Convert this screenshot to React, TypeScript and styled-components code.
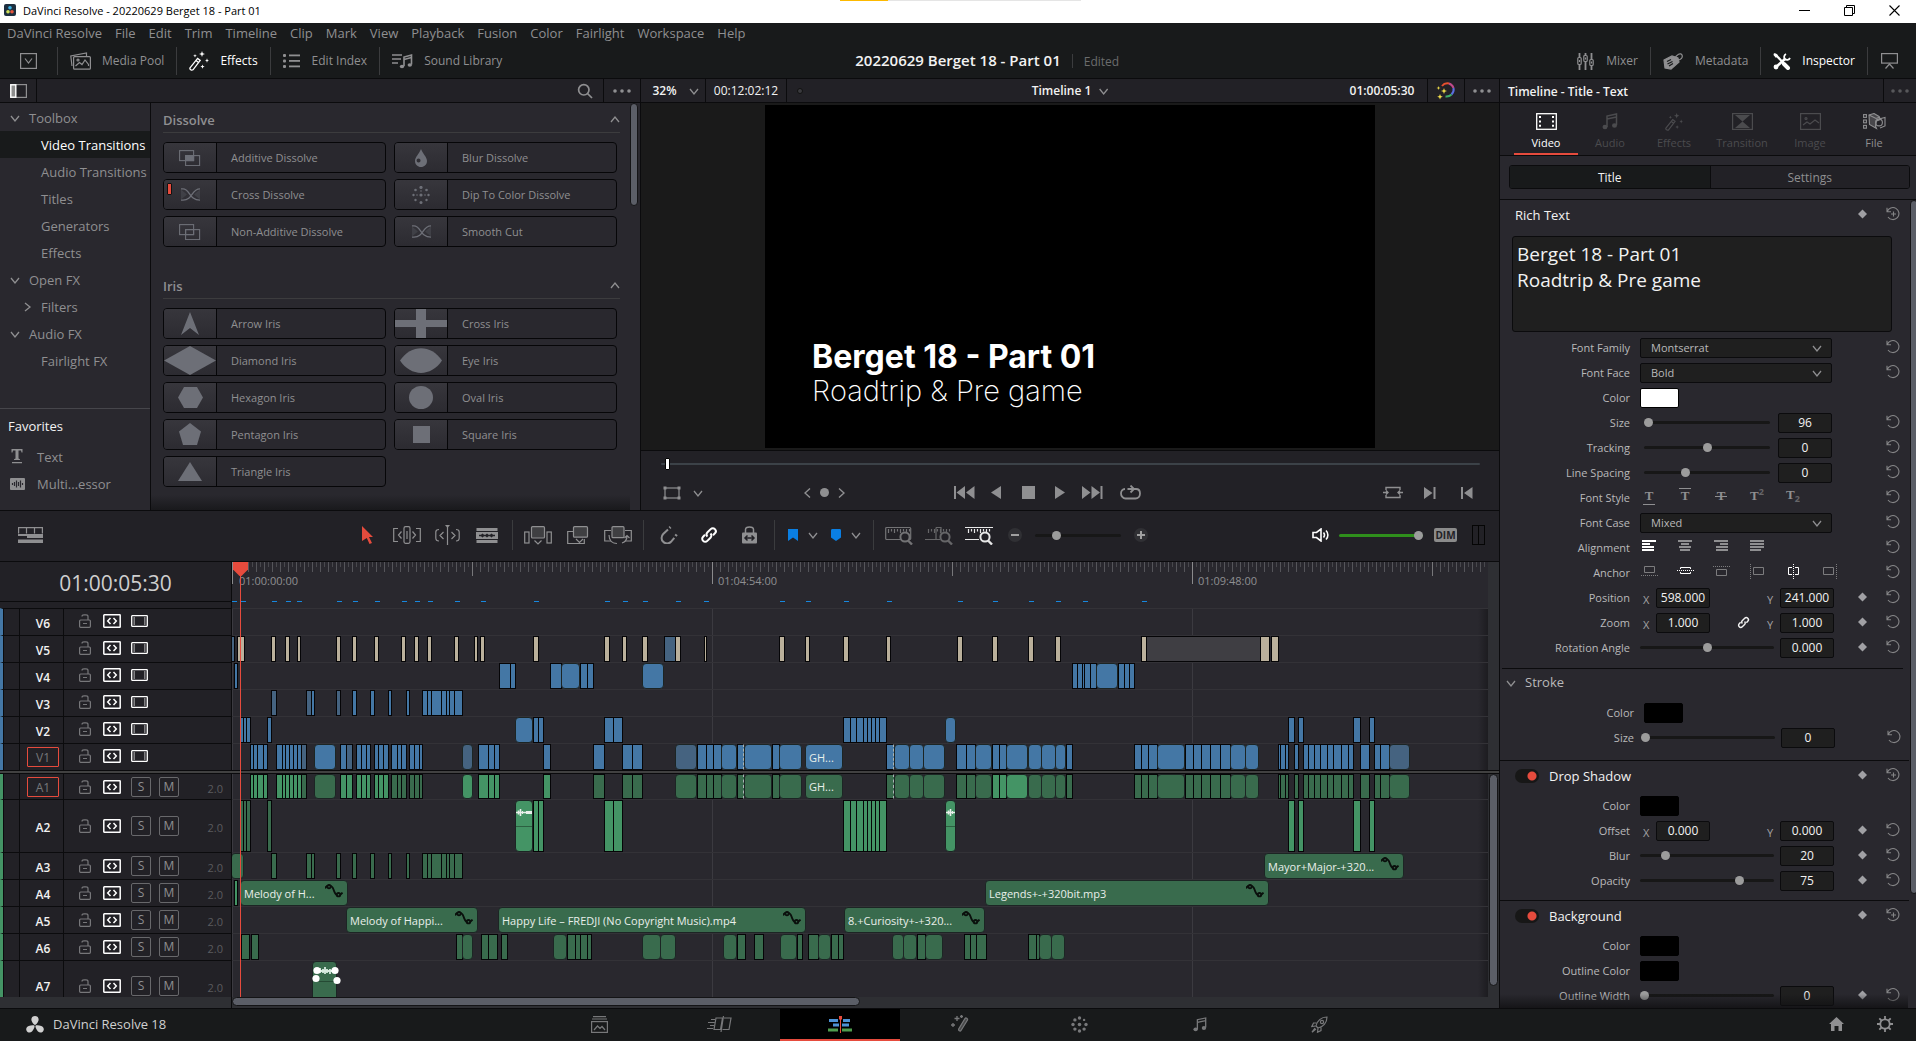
import React from "react";
import styled, { createGlobalStyle, css } from "styled-components";

/* ------------------------------------------------------------------ theme */

const c = {
  top: "#181a1b",
  bar: "#222126",
  panel: "#29282e",
  line: "#0b0b0d",
  well: "#1f1f1f",
  text: "#8f8f91",
  dim: "#4b4b4e",
  soft: "#b9b9ba",
  bright: "#f2f2f2",
  red: "#e64b3d",
  blue: "#4477a5",
  blueDark: "#456380",
  tan: "#bab09b",
  green: "#449465",
  greenDark: "#396b4d",
  thumb: "#5b5e67",
  gutter: "#2e2f33",
};

const GlobalStyle = createGlobalStyle`
  *, *::before, *::after { box-sizing: border-box; }
  html, body { margin: 0; padding: 0; background: ${c.top}; }
  body, button, input, select, textarea {
    font-family: "Open Sans", "Noto Sans", "Liberation Sans", sans-serif;
    font-size: 12px;
    color: ${c.text};
  }
  button { background: none; border: 0; padding: 0; margin: 0; cursor: pointer; }
  svg { display: block; flex: none; }
`;

/* ------------------------------------------------------------------ icons */

type IconProps = {
  w?: number;
  h?: number;
  box?: string;
  sw?: number;
  fill?: boolean;
  children: React.ReactNode;
};

const Icon = ({ w = 18, h = 18, box, sw = 1.2, fill, children }: IconProps) => (
  <svg
    width={w}
    height={h}
    viewBox={box ?? `0 0 ${w} ${h}`}
    fill={fill ? "currentColor" : "none"}
    stroke={fill ? "none" : "currentColor"}
    strokeWidth={sw}
    aria-hidden="true"
  >
    {children}
  </svg>
);

const Chevron = ({ dir = "down" }: { dir?: "down" | "up" | "right" }) => {
  const d = { down: "M1 3l4 5 4-5", up: "M1 7l4-5 4 5", right: "M3 1l5 4-5 4" }[dir];
  return (
    <Icon w={10} h={10} sw={1.3}>
      <path d={d} />
    </Icon>
  );
};

const Dots = () => (
  <Icon w={18} h={6} fill>
    <circle cx="2" cy="3" r="1.8" />
    <circle cx="9" cy="3" r="1.8" />
    <circle cx="16" cy="3" r="1.8" />
  </Icon>
);

const MediaPoolIcon = () => (
  <Icon w={21} h={18} sw={1.2}>
    <path d="M2 14L.8 4 16.5 1v3" />
    <rect x="3.6" y="4.6" width="16.8" height="12.6" rx="1" />
    <path d="M5.5 14l4-3.5 2.5 2 3-4.5 3.5 4.5V14" />
    <circle cx="8" cy="8" r="1" />
  </Icon>
);

const WandIcon = ({ size = 20 }: { size?: number }) => (
  <Icon w={size} h={size} box="0 0 20 20" sw={1.3}>
    <path d="M1 16.8L8.6 7.4l2.6 2L4 18.8c-1.5.9-3.6-.5-3-2z" />
    <path d="M7 9.4l2.6 2" />
    <path
      d="M13 0l.8 2.2 2.2.8-2.2.8L13 6l-.8-2.2L10 3l2.2-.8zM18 7.2l.6 1.7 1.4.6-1.4.6-.6 1.7-.6-1.7-1.4-.6 1.4-.6zM13.5 13.5l.6 1.5 1.5.6-1.5.6-.6 1.5-.6-1.5-1.5-.6 1.5-.6zM6 3l.5 1.3 1.3.5-1.3.5L6 6.6l-.5-1.3-1.3-.5 1.3-.5z"
      fill="currentColor"
      stroke="none"
    />
  </Icon>
);

const EditIndexIcon = () => (
  <Icon w={18} h={14} fill>
    <rect x="0" y="0" width="3" height="3" rx="1" />
    <rect x="0" y="5.5" width="3" height="3" rx="1" />
    <rect x="0" y="11" width="3" height="3" rx="1" />
    <rect x="6" y="0.5" width="11" height="1.8" />
    <rect x="6" y="6" width="11" height="1.8" />
    <rect x="6" y="11.5" width="11" height="1.8" />
  </Icon>
);

const SoundLibraryIcon = () => (
  <Icon w={21} h={16} sw={1.6}>
    <path d="M0 2h10M0 6h9M0 10h6" />
    <path d="M12 13V4l7.5-2v9.5" />
    <path d="M12 6.5l7.5-2" />
    <ellipse cx="10" cy="13.5" rx="2.2" ry="1.8" fill="currentColor" stroke="none" />
    <ellipse cx="17.8" cy="12" rx="2.2" ry="1.8" fill="currentColor" stroke="none" />
  </Icon>
);

const NoteIcon = ({ w = 16, h = 17 }: { w?: number; h?: number }) => (
  <Icon w={w} h={h} box="0 0 16 17" sw={1.5}>
    <path d="M5 14V3l9.500-2v11M5 6l9.500-2" />
    <ellipse cx="3" cy="14" rx="2.5" ry="2.2" fill="currentColor" stroke="none" />
    <ellipse cx="12.5" cy="12.5" rx="2.5" ry="2.2" fill="currentColor" stroke="none" />
  </Icon>
);

const MixerIcon = () => (
  <Icon w={17} h={17} sw={1.2}>
    <path d="M2.500 0v4M2.500 12v5M8.500 0v2M8.500 9v8M14.500 0v6M14.500 13v4" strokeWidth={1.8} />
    <rect x="0.8" y="4.5" width="3.4" height="7" rx="1" />
    <rect x="6.8" y="2.5" width="3.4" height="6" rx="1" />
    <rect x="12.8" y="6.5" width="3.4" height="6" rx="1" />
    <path d="M2.500 7v2M8.500 4.500v2M14.500 8.500v2" />
  </Icon>
);

const MetadataIcon = () => (
  <Icon w={20} h={17} sw={1.2}>
    <path d="M1 7l8-4 6 2 1 4-8 7-6-1z" fill="currentColor" />
    <path d="M4 8.500l4-2M4.500 11l5-2.500M6 13l4-2.500" stroke={c.top} />
    <path d="M12 6c1-5 6-6.500 7-4s-1 5-4 5" />
  </Icon>
);

const InspectorIcon = () => (
  <Icon w={18} h={17} sw={2.2}>
    <path d="M2 1l13 14" />
    <path d="M11 11l4 4" strokeWidth={4} strokeLinecap="round" />
    <path d="M2.500 14.500L12 6" strokeWidth={2.6} />
    <path d="M13 1c-2 1-2.500 3.500-1 5s4 1 5-1" strokeWidth={1.8} />
    <circle cx="3" cy="14" r="2.4" fill="currentColor" stroke="none" />
    <path d="M1 0l4 2-2 3-2.500-3z" fill="currentColor" stroke="none" />
  </Icon>
);

const FilmIcon = () => (
  <Icon w={21} h={17} sw={1.3}>
    <rect x="0.7" y="0.7" width="19.6" height="15.6" />
    <path d="M4 3v11M17 3v11" strokeWidth={2} strokeDasharray="2 2.4" />
  </Icon>
);

const FileIcon = () => (
  <Icon w={23} h={17} sw={1.1}>
    <rect x="0.6" y="1.6" width="2.8" height="2.8" />
    <rect x="0.6" y="7" width="2.8" height="2.8" />
    <rect x="0.6" y="12.4" width="2.8" height="2.8" />
    <path d="M6 2l5-1.500 5 3 1.500 3-4 1.500-1 5 1 2.500-7-4z" fill="currentColor" fillOpacity={0.35} />
    <path d="M6 2l7 3.500 4-1.500" />
    <circle cx="16" cy="9.5" r="3.4" />
    <path d="M16 6l6-1.500v8.500l-5 2" />
  </Icon>
);

const ResetIcon = ({ plus }: { plus?: boolean }) => (
  <Icon w={14} h={14} sw={1.1}>
    <path d="M1 .8v4h4M1.200 4.800A6 6 0 1 1 2 10" />
    {plus && <path d="M7.500 4.500v5M5 7h5" />}
  </Icon>
);

const DiamondIcon = () => (
  <Icon w={9} h={10} fill>
    <path d="M4.500.5L9 5 4.500 9.500 0 5z" />
  </Icon>
);

const LinkIcon = ({ size = 18 }: { size?: number }) => (
  <Icon w={size} h={size} box="0 0 18 18" sw={2}>
    <path d="M7.500 10.500c-1.200-1.200-1.200-3 0-4.200l3.200-3.200c1.200-1.200 3-1.200 4.200 0s1.200 3 0 4.200L13 9.200" />
    <path d="M10.500 7.500c1.200 1.200 1.200 3 0 4.200l-3.200 3.200c-1.200 1.200-3 1.200-4.200 0s-1.200-3 0-4.200L5 8.800" />
  </Icon>
);

const LockIcon = () => (
  <Icon w={12} h={14} sw={1.2}>
    <rect x="0.6" y="6" width="10.8" height="7.3" rx="1" />
    <path d="M9 6V2.500C9 1.500 8 .8 7 .8H5c-1.200 0-2 .7-2 1.700M4 9.500h4" />
  </Icon>
);

const AutoSelectIcon = () => (
  <Icon w={18} h={14} sw={1.5}>
    <rect x="0.8" y="0.8" width="16.4" height="12.4" rx="0.5" />
    <path d="M7.500 4L4.700 7l2.800 3M10.500 4l2.800 3-2.800 3" />
  </Icon>
);

const TrackFilmIcon = () => (
  <Icon w={17} h={12} sw={1.3}>
    <rect x="0.7" y="0.7" width="15.6" height="10.6" rx="0.5" />
    <path d="M3.200 2.500v8M13.800 2.500v8" strokeDasharray="1 1" />
  </Icon>
);

const CurveIcon = () => (
  <svg width="18" height="14" viewBox="0 0 18 14" fill="none" stroke="#0a0f0c" strokeWidth="1.9" aria-hidden="true">
    <path d="M0 4.500c1-3 6.500-5 8.500 1s4.500 8.500 9 3" />
    <circle cx="4" cy="2.7" r="1.7" fill={c.greenDark} />
    <circle cx="13.5" cy="10.7" r="1.7" fill={c.greenDark} />
  </svg>
);

const ZoomRulerIcon = ({ kind }: { kind: "full" | "detail" | "custom" }) => (
  <Icon w={29} h={19} sw={1.2}>
    {kind === "full" && <rect x="0.7" y="1.5" width="25" height="12" rx="1" />}
    {kind === "detail" && <path d="M0 13.500h12M11 1.500v12h4M11 1.500h5v6" />}
    {kind === "custom" && <path d="M0 1.500h28M0 13.500h14" />}
    <path d="M3.500 3v4M6.500 3v2.500M9.500 3v4M12.500 3v2.500M15.500 3v4M18.500 3v2.500M21.500 3v4M24.500 3v2.500" />
    <circle cx="20" cy="11" r="4.6" fill={c.bar} strokeWidth={2} />
    <path d="M23 14.500l4 4" strokeWidth={2.4} />
  </Icon>
);

/* ------------------------------------------------------- shared primitives */

const IconButton = styled.button<{ $w?: number; $color?: string }>`
  display: inline-flex;
  align-items: center;
  justify-content: center;
  flex: none;
  width: ${(p) => (p.$w ? `${p.$w}px` : "auto")};
  height: 24px;
  color: ${(p) => p.$color ?? c.text};
`;

const Range = styled.input.attrs({ type: "range" })<{ $w: number; $track?: string }>`
  appearance: none;
  flex: none;
  width: ${(p) => p.$w}px;
  height: 10px;
  margin: 0;
  background: transparent;
  &::-webkit-slider-runnable-track {
    height: 3px;
    border-radius: 2px;
    background: ${(p) => p.$track ?? "#171717"};
  }
  &::-webkit-slider-thumb {
    appearance: none;
    width: 9px;
    height: 9px;
    margin-top: -3px;
    border-radius: 50%;
    background: #9c9c9c;
  }
`;

const ScrollThumb = styled.div<{ $w: string; $h: string }>`
  width: ${(p) => p.$w};
  height: ${(p) => p.$h};
  border: 1px solid #141416;
  border-radius: 5px;
  background: ${c.thumb};
`;

/* ---------------------------------------------------------------- page frame */

const Page = styled.div`
  display: flex;
  flex-direction: column;
  width: 100%;
  height: 100vh;
  overflow: hidden;
  background: ${c.top};
`;

const TitleBar = styled.header`
  position: relative;
  display: flex;
  align-items: center;
  flex: none;
  height: 23px;
  padding: 0 16px 3px 4px;
  background: #fff;
  color: #000;
  font-size: 11px;
`;

const TaskProgress = styled.div`
  position: absolute;
  top: 0;
  left: 50%;
  width: 241px;
  height: 1px;
  margin-left: -118px;
  background: linear-gradient(90deg, #fdb900 48px, #e5e5e5 48px);
`;

const AppBadge = styled.span`
  margin-right: 7px;
`;

const WindowButtons = styled.div`
  display: flex;
  gap: 34px;
  margin-left: auto;
  button { color: #000; height: 18px; }
`;

const MenuBar = styled.nav`
  display: flex;
  gap: 13px;
  align-items: center;
  flex: none;
  height: 19px;
  padding-left: 7px;
  button { font-size: 13px; line-height: 18px; }
`;

const AppToolbar = styled.div`
  display: grid;
  grid-template-columns: 1fr auto 1fr;
  align-items: center;
  flex: none;
  height: 37px;
  padding-top: 2px;
  border-bottom: 1px solid ${c.line};
`;

const ToolbarSide = styled.div<{ $end?: boolean }>`
  display: flex;
  align-items: center;
  ${(p) => p.$end && css`margin-left: auto;`}
`;

const VRule = styled.span<{ $h?: number; $m?: number }>`
  flex: none;
  width: 1px;
  height: ${(p) => p.$h ?? 28}px;
  margin: 0 ${(p) => p.$m ?? 0}px;
  background: #3b3c3e;
`;

const PanelToggle = styled.button<{ $on?: boolean }>`
  display: flex;
  align-items: center;
  gap: 11px;
  height: 28px;
  padding: 0 12px;
  line-height: 28px;
  color: ${(p) => (p.$on ? "#fff" : c.text)};
`;

const ViewToggle = styled(PanelToggle)`
  gap: 12px;
`;

const FullScreenButton = styled(IconButton)`
  padding-right: 5px;
`;

const ProjectTitle = styled.h1`
  margin: 0;
  font-size: 15px;
  line-height: 22px;
  padding-bottom: 2px;
  font-weight: 600;
  color: ${c.bright};
`;

const ProjectState = styled.span`
  color: #6b6c6d;
`;

const Workspace = styled.main`
  display: grid;
  grid-template-columns: minmax(0, 1fr) 417px;
  flex: 1;
  min-height: 0;
`;

const LeftColumn = styled.div`
  display: flex;
  flex-direction: column;
  min-height: 0;
`;

const UpperRow = styled.div`
  display: grid;
  grid-template-columns: 640px minmax(0, 1fr);
  flex: none;
  height: 432px;
  border-bottom: 1px solid ${c.line};
`;

const PanelHeader = styled.div`
  display: flex;
  align-items: center;
  flex: none;
  height: 24px;
  border-bottom: 1px solid ${c.line};
  background: ${c.bar};
`;

const HeaderCell = styled.div<{ $w: number; $side?: "left" | "right" }>`
  display: flex;
  align-items: center;
  justify-content: center;
  gap: 12px;
  flex: none;
  width: ${(p) => p.$w}px;
  height: 100%;
  ${(p) => (p.$side === "left" ? "border-left" : "border-right")}: 1px solid ${c.line};
`;

/* ------------------------------------------------------------- effects panel */

const EffectsPanel = styled.section`
  display: flex;
  flex-direction: column;
  min-height: 0;
  background: ${c.panel};
`;

const SearchSlot = styled.div`
  display: flex;
  justify-content: flex-end;
  flex: 1;
  padding-right: 10px;
`;

const EffectsBody = styled.div`
  display: grid;
  grid-template-columns: 151px 1fr 10px;
  flex: 1;
  min-height: 0;
`;

const Sidebar = styled.nav`
  display: flex;
  flex-direction: column;
  padding-top: 1px;
  border-right: 1px solid ${c.line};
`;

const SideItem = styled.button<{ $level: number; $on?: boolean; $fav?: boolean }>`
  display: flex;
  align-items: center;
  gap: ${(p) => (p.$fav ? 12 : 9)}px;
  flex: none;
  height: 27px;
  padding-left: ${(p) => p.$level}px;
  font-size: 13px;
  white-space: nowrap;
  color: ${(p) => (p.$on ? "#fff" : c.text)};
  background: ${(p) => (p.$on ? c.top : "transparent")};
`;

const Favorites = styled.div`
  display: flex;
  flex-direction: column;
  margin-top: 34px;
  padding-top: 4px;
  border-top: 1px solid #46464b;
  h2 {
    margin: 0 0 4px;
    padding-left: 8px;
    font-size: 13px;
    line-height: 26px;
    font-weight: 400;
    color: ${c.bright};
  }
`;

const EffectsScroll = styled.div`
  position: relative;
  overflow: hidden;
  padding: 5px 10px 0 12px;
  &::after {
    content: "";
    position: absolute;
    inset: auto 0 0 0;
    height: 15px;
    background: linear-gradient(transparent, #19191c);
  }
`;

const EffectGroup = styled.section`
  margin-bottom: 27px;
`;

const GroupTitle = styled.h2`
  display: flex;
  align-items: center;
  justify-content: space-between;
  height: 25px;
  margin: 0 0 9px;
  border-bottom: 1px solid #3c3c3e;
  font-size: 13px;
  font-weight: 600;
  color: ${c.text};
`;

const EffectGrid = styled.div`
  display: grid;
  grid-template-columns: 1fr 1fr;
  gap: 6px 8px;
  padding-right: 3px;
`;

const EffectCard = styled.button`
  position: relative;
  display: flex;
  align-items: stretch;
  height: 31px;
  overflow: hidden;
  border: 1px solid #060608;
  border-radius: 4px;
  font-size: 11px;
  line-height: 29px;
  text-align: left;
`;

const EffectThumb = styled.span`
  display: flex;
  align-items: center;
  justify-content: center;
  width: 53px;
  margin-right: 14px;
  border-right: 1px solid #060608;
  color: #6d6f77;
  background: linear-gradient(#37363c, #2c2b31);
`;

const DefaultMark = styled.i`
  position: absolute;
  top: 3px;
  left: 3px;
  width: 5px;
  height: 12px;
  border: 1px solid #111;
  border-radius: 1px;
  background: ${c.red};
`;

const overlap = (solid: boolean) => (
  <Icon w={22} h={16} sw={1.1}>
    <rect x="0.6" y="0.6" width="14" height="10" />
    <rect x="6.6" y="5.6" width="14" height="10" />
    <rect x="6.6" y="5.6" width="8" height="5" fill={solid ? "currentColor" : "none"} />
  </Icon>
);

const crossing = (
  <Icon w={19} h={13} sw={1.3}>
    <path d="M0 .8h2c7 0 6 11.400 17 11.400M0 12.200h2C12 12.200 10 .8 19 .8" />
    <path d="M0 1.500v10l6-5zM19 1.500v10l-6-5z" fill="currentColor" fillOpacity={0.25} stroke="none" />
  </Icon>
);

const shape = (el: React.ReactNode) => (
  <Icon w={52} h={29} fill>
    {el}
  </Icon>
);

const dipSpots = [
  [9, 1.5, 1.6], [3.5, 4, 1.3], [14.5, 4, 1.3], [1.5, 9, 1.2], [9, 9, 1.6], [16.5, 9, 1.2],
  [3.5, 14, 1.2], [14.5, 14, 1.2], [9, 16.5, 1.5], [9, 5, 0.8], [5, 9, 0.8], [13, 9, 0.8],
];

const dipDots = (
  <Icon w={18} h={18} fill>
    {dipSpots.map(([x, y, r], i) => (
      <circle key={i} cx={x} cy={y} r={r} />
    ))}
  </Icon>
);

type Effect = { name: string; art: React.ReactNode; isDefault?: boolean };

const dissolves: Effect[] = [
  { name: "Additive Dissolve", art: overlap(true) },
  {
    name: "Blur Dissolve",
    art: (
      <Icon w={14} h={18} fill>
        <path d="M7 0c2 5 6 8 6 12 0 3.500-2.700 6-6 6s-6-2.500-6-6c0-4 4-7 6-12zM4.500 9.500a2 2 0 1 0 .1 4 2 2 0 1 0-.1-4z" fillRule="evenodd" />
      </Icon>
    ),
  },
  { name: "Cross Dissolve", art: crossing, isDefault: true },
  { name: "Dip To Color Dissolve", art: dipDots },
  { name: "Non-Additive Dissolve", art: overlap(false) },
  { name: "Smooth Cut", art: crossing },
];

const irises: Effect[] = [
  { name: "Arrow Iris", art: shape(<path d="M26 3l9 23-9-7-9 7z" />) },
  { name: "Cross Iris", art: shape(<path d="M21 0h10v11h21v7H31v11H21V18H0v-7h21z" />) },
  { name: "Diamond Iris", art: shape(<path d="M26 0l26 14.500L26 29 0 14.500z" />) },
  { name: "Eye Iris", art: shape(<path d="M5 14.500C16-2 36-2 47 14.500 36 31 16 31 5 14.500z" />) },
  { name: "Hexagon Iris", art: shape(<path d="M20 4h13l6 10.500L33 25H20l-6-10.500z" />) },
  { name: "Oval Iris", art: shape(<ellipse cx="26" cy="14.5" rx="12" ry="11.5" />) },
  { name: "Pentagon Iris", art: shape(<path d="M26 3l11 8.500L33 25H19l-4-13.500z" />) },
  { name: "Square Iris", art: shape(<rect x="18" y="6" width="17" height="17" />) },
  { name: "Triangle Iris", art: shape(<path d="M26 5l12 19H14z" />) },
];

const EffectSection = ({ title, items }: { title: string; items: Effect[] }) => (
  <EffectGroup>
    <GroupTitle>
      {title}
      <Chevron dir="up" />
    </GroupTitle>
    <EffectGrid>
      {items.map((e) => (
        <EffectCard key={e.name}>
          <EffectThumb>{e.art}</EffectThumb>
          {e.isDefault && <DefaultMark />}
          {e.name}
        </EffectCard>
      ))}
    </EffectGrid>
  </EffectGroup>
);

const Effects = () => (
  <EffectsPanel>
    <PanelHeader>
      <HeaderCell $w={37}>
        <IconButton aria-label="Toggle sidebar">
          <Icon w={17} h={14} sw={1.2}>
            <rect x="0.6" y="0.6" width="15.8" height="12.8" />
            <rect x="0.8" y="0.8" width="5" height="12.4" fill="#8d8d8d" stroke="#fff" strokeWidth={1.4} />
          </Icon>
        </IconButton>
      </HeaderCell>
      <SearchSlot>
        <IconButton aria-label="Search">
          <Icon w={16} h={16} sw={1.7}>
            <circle cx="6.8" cy="6.8" r="5.2" />
            <path d="M10.500 10.500l4.500 4.500" />
          </Icon>
        </IconButton>
      </SearchSlot>
      <HeaderCell $w={37} $side="left">
        <IconButton aria-label="Effects options"><Dots /></IconButton>
      </HeaderCell>
    </PanelHeader>
    <EffectsBody>
      <Sidebar>
        <SideItem $level={10}><Chevron />Toolbox</SideItem>
        <SideItem $level={41} $on>Video Transitions</SideItem>
        <SideItem $level={41}>Audio Transitions</SideItem>
        <SideItem $level={41}>Titles</SideItem>
        <SideItem $level={41}>Generators</SideItem>
        <SideItem $level={41}>Effects</SideItem>
        <SideItem $level={10}><Chevron />Open FX</SideItem>
        <SideItem $level={22}><Chevron dir="right" />Filters</SideItem>
        <SideItem $level={10}><Chevron />Audio FX</SideItem>
        <SideItem $level={41}>Fairlight FX</SideItem>
        <Favorites>
          <h2>Favorites</h2>
          <SideItem $level={10} $fav>
            <Icon w={15} h={15} fill>
              <path d="M1.500 0h11v3.500h-1L11 1.500H8.500v8l1.500.7V11H4v-.8l1.500-.7v-8H3l-.5 2h-1zM2 13h10v1.300H2z" />
            </Icon>
            Text
          </SideItem>
          <SideItem $level={10} $fav>
            <Icon w={15} h={12} fill>
              <rect width="15" height="12" rx="1" />
              <path d="M2.500 5v2M4.500 4v4M6.500 2.500v7M8.500 4v4M10.500 2.500v7M12.500 5v2" stroke="#29282e" />
            </Icon>
            Multi...essor
          </SideItem>
        </Favorites>
      </Sidebar>
      <EffectsScroll>
        <EffectSection title="Dissolve" items={dissolves} />
        <EffectSection title="Iris" items={irises} />
      </EffectsScroll>
      <ScrollThumb $w="8px" $h="103px" />
    </EffectsBody>
  </EffectsPanel>
);

/* -------------------------------------------------------------------- viewer */

const ViewerPanel = styled.section`
  display: flex;
  flex-direction: column;
  min-height: 0;
  border-left: 1px solid ${c.line};
  background: ${c.bar};
`;

const ViewerTitle = styled.div`
  position: absolute;
  left: 50%;
  display: flex;
  align-items: center;
  gap: 7px;
  transform: translateX(-50%);
  font-weight: 600;
  color: ${c.bright};
`;

const ViewerHeader = styled(PanelHeader)`
  position: relative;
  color: ${c.bright};
`;

const ZoomCell = styled(HeaderCell)`
  padding-left: 5px;
`;

const Timecode = styled.output<{ $strong?: boolean }>`
  font-weight: ${(p) => (p.$strong ? 600 : 400)};
  font-size: 12px;
`;

const StatusDot = styled.i`
  width: 6px;
  height: 6px;
  margin-left: 10px;
  border: 1px solid #111;
  border-radius: 50%;
  background: #3a3a3e;
`;

const RightCells = styled.div`
  display: flex;
  align-items: center;
  height: 100%;
  margin-left: auto;
`;

const Stage = styled.div`
  display: flex;
  justify-content: center;
  flex: 1;
  min-height: 0;
  padding: 2px 0;
  border-bottom: 1px solid ${c.line};
  background: #1a1a1a;
`;

const Frame = styled.div`
  display: flex;
  flex-direction: column;
  justify-content: flex-end;
  height: 100%;
  aspect-ratio: 16 / 9;
  padding: 0 0 40px 47px;
  background: #000;
  color: #fff;
  font-family: Inter, "Open Sans", sans-serif;
  p { margin: 0; white-space: nowrap; line-height: 34px; }
`;

const FrameHeading = styled.p`
  font-size: 32px;
  font-weight: 700;
`;

const FrameSub = styled.p`
  font-size: 29px;
  font-weight: 200;
`;

const Scrubber = styled(Range)`
  width: auto;
  height: 14px;
  margin: 6px 19px 8px 20px;
  &::-webkit-slider-runnable-track { height: 2px; background: #3c4248; }
  &::-webkit-slider-thumb {
    width: 5px;
    height: 12px;
    margin-top: -5px;
    border: 1px solid #000;
    border-radius: 1px;
    background: #fff;
  }
`;

const Transport = styled.div`
  display: flex;
  align-items: center;
  height: 31px;
  padding: 0 14px 4px 22px;
`;

const TransportGroup = styled.div<{ $before?: string; $gap?: number }>`
  display: flex;
  align-items: center;
  gap: ${(p) => p.$gap ?? 0}px;
  margin-left: ${(p) => p.$before ?? "0"};
`;

const Viewer = () => (
  <ViewerPanel>
    <ViewerHeader>
      <ZoomCell $w={65}>
        <Timecode $strong>32%</Timecode>
        <IconButton aria-label="Zoom level"><Chevron /></IconButton>
      </ZoomCell>
      <HeaderCell $w={81}><Timecode>00:12:02:12</Timecode></HeaderCell>
      <StatusDot />
      <ViewerTitle>
        Timeline 1
        <IconButton aria-label="Choose timeline"><Chevron /></IconButton>
      </ViewerTitle>
      <RightCells>
        <HeaderCell $w={91}><Timecode $strong>01:00:05:30</Timecode></HeaderCell>
        <HeaderCell $w={37}>
          <IconButton aria-label="Bypass color grades">
            <svg width="20" height="18" viewBox="0 0 20 18" fill="none" strokeWidth="2" aria-hidden="true">
              <path d="M6 4a7 7 0 0 1 7-2.500" stroke="#e8502e" />
              <path d="M13 1.500a7 7 0 0 1 4.500 4.500" stroke="#c04a8c" />
              <path d="M17.500 6a7 7 0 0 1-2 6.500" stroke="#5a6fe0" />
              <path d="M15.500 12.500a7 7 0 0 1-6 2" stroke="#3fae6a" />
              <path d="M8 6l.8 2.200 2.200.8-2.200.8L8 12l-.8-2.200L5 9l2.200-.8zM2.500 4l.5 1.500 1.500.5-1.500.5L2.500 8 2 6.500.5 6 2 5.500zM4 12l.8 2 2 .8-2 .8-.8 2-.8-2-2-.8 2-.8z" fill="#f4e04a" />
            </svg>
          </IconButton>
        </HeaderCell>
        <IconButton $w={34} aria-label="Viewer options"><Dots /></IconButton>
      </RightCells>
    </ViewerHeader>
    <Stage>
      <Frame>
        <FrameHeading>Berget 18 - Part 01</FrameHeading>
        <FrameSub>Roadtrip &amp; Pre game</FrameSub>
      </Frame>
    </Stage>
    <Scrubber $w={0} aria-label="Playback position" min={0} max={1000} defaultValue={5} />
    <Transport>
      <TransportGroup $gap={12}>
        <IconButton aria-label="Transform">
          <Icon w={18} h={14} sw={1.2}>
            <rect x="2" y="2" width="14" height="10" />
            <path d="M.5.5h3v3h-3zM14.500.5h3v3h-3zM.5 10.500h3v3h-3zM14.500 10.500h3v3h-3z" fill="currentColor" stroke="none" />
          </Icon>
        </IconButton>
        <IconButton aria-label="Transform mode"><Chevron /></IconButton>
      </TransportGroup>
      <TransportGroup $before="101px" $gap={9}>
        <IconButton aria-label="Previous keyframe"><Icon w={7} h={10} sw={1.4}><path d="M6 .5L1 5l5 4.500" /></Icon></IconButton>
        <IconButton aria-label="Keyframe"><Icon w={9} h={9} fill><circle cx="4.5" cy="4.5" r="4.5" /></Icon></IconButton>
        <IconButton aria-label="Next keyframe"><Icon w={7} h={10} sw={1.4}><path d="M1 .5L6 5 1 9.500" /></Icon></IconButton>
      </TransportGroup>
      <TransportGroup $before="103px">
        <IconButton $w={32} aria-label="First frame"><Icon w={21} h={13} fill><path d="M0 0h2v13H0zM11 0v13L2.500 6.500zM20.500 0v13L12 6.500z" /></Icon></IconButton>
        <IconButton $w={32} aria-label="Play reverse"><Icon w={10} h={13} fill><path d="M10 0v13L0 6.500z" /></Icon></IconButton>
        <IconButton $w={32} aria-label="Stop"><Icon w={13} h={13} fill><rect width="13" height="13" /></Icon></IconButton>
        <IconButton $w={32} aria-label="Play"><Icon w={10} h={13} fill><path d="M0 0v13l10-6.500z" /></Icon></IconButton>
        <IconButton $w={32} aria-label="Last frame"><Icon w={21} h={13} fill><path d="M18.500 0h2v13h-2zM9.500 0v13L18 6.500zM0 0v13l8.500-6.500z" /></Icon></IconButton>
      </TransportGroup>
      <TransportGroup $before="6px">
        <IconButton $w={32} aria-label="Loop">
          <Icon w={21} h={15} sw={1.8}><path d="M5 4C2.500 4 1 6 1 8.500S3 13.500 5.500 13.500h10c2.500 0 4.500-2 4.500-5S18.500 4 16 4H7.500M10.500.5L14 4l-3.500 3.500" /></Icon>
        </IconButton>
      </TransportGroup>
      <TransportGroup $before="auto">
        <IconButton $w={37} aria-label="Match frame"><Icon w={20} h={13} sw={1.4}><path d="M3 4V1.500h14V4M3 9v2.500h14V9M0 6.500h5M3 4.500l2 2-2 2M20 6.500h-5M17 4.500l-2 2 2 2" /></Icon></IconButton>
        <IconButton $w={37} aria-label="Go to out point"><Icon w={12} h={12} fill><path d="M0 0v12l8.500-6zM9.500 0h2v12h-2z" /></Icon></IconButton>
        <IconButton $w={37} aria-label="Go to in point"><Icon w={12} h={12} fill><path d="M11.500 0v12L3 6zM0 0h2v12H0z" /></Icon></IconButton>
      </TransportGroup>
    </Transport>
  </ViewerPanel>
);

/* ---------------------------------------------------------- timeline toolbar */

const TimelineBar = styled.div`
  display: grid;
  grid-template-columns: 1fr auto 1fr;
  align-items: center;
  flex: none;
  height: 51px;
  padding-bottom: 2px;
  border-bottom: 1px solid ${c.line};
  background: ${c.bar};
`;

const BarSide = styled.div<{ $end?: boolean }>`
  display: flex;
  align-items: center;
  ${(p) => (p.$end ? css`justify-content: flex-end; padding-right: 14px;` : css`padding-left: 18px;`)}
`;

const BarTools = styled.div`
  display: flex;
  align-items: center;
  padding-right: 4px;
`;

const FlagTools = styled.div`
  display: flex;
  padding: 0 2px 0 3px;
  button:nth-child(3) { margin-left: 3px; }
`;

const ZoomTools = styled.div`
  display: flex;
  align-items: center;
  gap: 13px;
  margin-left: 9px;
`;

const RoundButton = styled.button`
  display: flex;
  align-items: center;
  justify-content: center;
  width: 14px;
  height: 14px;
  border-radius: 50%;
  background: #303034;
  color: #a0a0a0;
`;

const DimButton = styled.button`
  width: 23px;
  height: 14px;
  margin: 0 15px 0 11px;
  border-radius: 2px;
  background: #8b8b8b;
  color: ${c.bar};
  font-size: 10px;
  line-height: 14px;
  font-weight: 700;
`;

const Meter = styled.div`
  width: 13px;
  height: 20px;
  border: 1px solid #050505;
  background: linear-gradient(90deg, transparent 5px, #050505 5px 6px, transparent 6px);
`;

const VolumeRange = styled(Range)`
  margin-left: 9px;
`;

const TimelineToolbar = () => (
  <TimelineBar>
    <BarSide>
      <IconButton aria-label="Timeline view options">
        <Icon w={25} h={16} sw={1.2}>
          <path d="M.6 6.500V.6h23.800v5.900M8.500.6v6M16.500.6v6" />
          <path d="M0 7h25v4H9V9H0zM0 12.500h25V16H0z" fill="currentColor" stroke="none" />
        </Icon>
      </IconButton>
    </BarSide>
    <BarTools>
      <IconButton $w={40} $color={c.red} aria-label="Selection mode"><Icon w={11} h={18} fill><path d="M0 0l11 11H7l3 6-2.500 1-2.700-6L0 15z" /></Icon></IconButton>
      <IconButton $w={40} aria-label="Trim edit mode">
        <Icon w={28} h={18} sw={1.2}><path d="M5 2.500H.7v13H5M23 2.500h4.300v13H23M8.500 5.500L5.500 9l3 3.500M19.500 5.500l3 3.500-3 3.500" /><rect x="11" y="0.7" width="6" height="16.6" rx="1.5" /><path d="M14 5v8" /></Icon>
      </IconButton>
      <IconButton $w={40} aria-label="Dynamic trim mode">
        <Icon w={25} h={20} sw={1.2}><path d="M4 4.500C1.500 4.500.8 6 .8 7v6c0 1.500 1 3 3.200 3M21 4.500c2.500 0 3.200 1.500 3.200 2.500v6c0 1.500-1 3-3.200 3M12.500 2v18M8.500 7L5 10.500l3.500 3.500M16.500 7l3.500 3.500-3.500 3.500" /><path d="M10 0h5l-2.500 3z" fill="currentColor" stroke="none" /></Icon>
      </IconButton>
      <IconButton $w={40} aria-label="Blade edit mode">
        <Icon w={22} h={15} fill><path d="M.5 0h21v3H.5zM.5 12h21v3H.5z" /><path d="M0 4h22v7H0zM3 6.800v1.400h2L6.500 9.500 8 8.200h1.500L11 9.500l1.500-1.300H14l1.500 1.300L17 8.200h2V6.800h-2l-1.500-1.300L14 6.800h-1.500L11 5.500 9.500 6.800H8L6.500 5.500 5 6.800z" fillRule="evenodd" /></Icon>
      </IconButton>
      <VRule $h={30} $m={5} />
      <IconButton $w={40} aria-label="Insert clip">
        <Icon w={28} h={19} sw={1.2}><rect x="0.7" y="6" width="4.3" height="11" /><rect x="23" y="6" width="4.3" height="11" /><rect x="7.5" y="0.7" width="13" height="11.3" rx="1" fill="#3f3f42" /><path d="M10.500 14.500l3.500 3.500 3.500-3.500" /></Icon>
      </IconButton>
      <IconButton $w={40} aria-label="Overwrite clip">
        <Icon w={22} h={19} sw={1.2}><path d="M6 5.500H.7v12h16.600V13" /><rect x="6.5" y="0.7" width="14" height="10.5" rx="1" fill="#3f3f42" /><path d="M9 13l3.500 3.500L16 13" /></Icon>
      </IconButton>
      <IconButton $w={40} aria-label="Replace clip">
        <Icon w={28} h={19} sw={1.2}><path d="M7 4.500H.7V15H7M21 4.500h6.300V15H21" /><rect x="8" y="0.7" width="12" height="11" rx="1" fill="#3f3f42" /><path d="M5 9c0 6 4 8.500 8 8.500M23 10c0 4-2 6-5 7M20.500 12L23 9.500l2.500 2.500" /></Icon>
      </IconButton>
      <VRule $h={30} $m={5} />
      <IconButton $w={40} aria-label="Snapping">
        <Icon w={18} h={18} sw={2}><path d="M8 3.500L3.200 8A5.500 5.500 0 1 0 11 15.800l3.300-4" /><path d="M9.500 2l1-1M15.500 10l1.200-1.500" strokeWidth={2.6} /></Icon>
      </IconButton>
      <IconButton $w={40} $color="#fff" aria-label="Linked selection"><LinkIcon /></IconButton>
      <IconButton $w={40} aria-label="Position lock">
        <Icon w={15} h={18} sw={1.5}><path d="M3.500 7V3.500c0-3.500 8-3.500 8 0V7" /><rect x="0" y="6.5" width="15" height="11" rx="1" fill="currentColor" stroke="none" /><path d="M3 12h9M5.500 9.500L3 12l2.500 2.500M9.500 9.500L12 12l-2.500 2.500" stroke={c.bar} /></Icon>
      </IconButton>
      <VRule $h={30} $m={5} />
      <FlagTools>
        <IconButton $w={20} $color="#0a7fe3" aria-label="Flag clip"><Icon w={10} h={12} fill><path d="M0 0h10v12L5 8.500 0 12z" /></Icon></IconButton>
        <IconButton $w={20} aria-label="Flag color"><Chevron /></IconButton>
        <IconButton $w={20} $color="#0a7fe3" aria-label="Add marker"><Icon w={10} h={12} fill><path d="M1.500 0h7C9.500 0 10 .5 10 1.500v7L5 12 0 8.500v-7C0 .5.5 0 1.500 0z" /></Icon></IconButton>
        <IconButton $w={20} aria-label="Marker color"><Chevron /></IconButton>
      </FlagTools>
      <VRule $h={30} $m={5} />
      <IconButton $w={40} $color="#737375" aria-label="Full extent zoom"><ZoomRulerIcon kind="full" /></IconButton>
      <IconButton $w={40} $color="#666668" aria-label="Detail zoom"><ZoomRulerIcon kind="detail" /></IconButton>
      <IconButton $w={40} $color="#e8e8e8" aria-label="Custom zoom"><ZoomRulerIcon kind="custom" /></IconButton>
      <ZoomTools>
        <RoundButton aria-label="Zoom out"><Icon w={8} h={8} sw={2}><path d="M0 4h8" /></Icon></RoundButton>
        <Range $w={86} aria-label="Timeline zoom" defaultValue={22} />
        <RoundButton aria-label="Zoom in"><Icon w={8} h={8} sw={2}><path d="M0 4h8M4 0v8" /></Icon></RoundButton>
      </ZoomTools>
    </BarTools>
    <BarSide $end>
      <IconButton $color="#fff" aria-label="Mute">
        <Icon w={18} h={14} sw={1.6}><path d="M1 4.500h3.500L9 1v12L4.500 9.500H1zM11.500 4.500c1.200 1.500 1.200 3.500 0 5M14 2.500c2.500 2.500 2.500 6.500 0 9" /></Icon>
      </IconButton>
      <VolumeRange $w={84} $track="#2f8f1c" aria-label="Volume" defaultValue={100} />
      <DimButton>DIM</DimButton>
      <Meter />
    </BarSide>
  </TimelineBar>
);

/* ------------------------------------------------------------------ timeline */

type Clip = { from: number; to: number; color: string; round?: boolean; label?: string; curve?: boolean; wave?: boolean; through?: boolean };

/* x position of the first ruler mark */
const ORIGIN = 232;

/* clips that touch each other, given by their shared edges */
const run = (color: string, ...edges: number[]): Clip[] =>
  edges.slice(1).map((to, i) => ({ from: edges[i], to, color }));

const round = (color: string, from: number, to: number, more: Partial<Clip> = {}): Clip => ({ from, to, color, round: true, ...more });

const rounds = (color: string, ...edges: number[]): Clip[] =>
  edges.slice(1).map((to, i) => round(color, edges[i], to));

const { blue: B, blueDark: D, tan: T, green: G, greenDark: E } = c;

const singles = (color: string, list: [number, number][]): Clip[] => list.map(([from, to]) => ({ from, to, color }));

const v5: Clip[] = [
  ...run(D, 230, 234),
  ...singles(T, [[237, 244], [271, 275], [285, 289], [297, 300], [336, 340], [352, 356], [374, 378], [401, 405], [414, 418], [427, 431], [454, 458], [474, 477], [480, 484], [533, 538], [604, 609], [622, 626], [642, 647]]),
  ...run(D, 664, 675),
  ...singles(T, [[675, 680], [704, 706], [779, 784], [805, 809], [843, 848], [886, 890], [957, 962], [992, 997], [1028, 1033], [1055, 1060]]),
  { from: 1146, to: 1260, color: "#3f3e43" },
  ...singles(T, [[1141, 1146], [1260, 1269], [1271, 1278]]),
];

const v4: Clip[] = [
  ...run(B, 234, 237), ...run(B, 499, 510, 515), ...run(B, 550, 561), round(B, 562, 580), ...run(B, 580, 587, 593),
  round(B, 643, 664), ...run(B, 1072, 1077, 1082, 1084, 1090, 1096), round(B, 1097, 1118), ...run(B, 1118, 1124, 1129, 1134),
];

const v3: Clip[] = [
  ...run(D, 271, 276), ...run(D, 306, 311), ...run(B, 311, 314), ...run(D, 336, 340),
  ...singles(B, [[352, 356], [370, 374], [388, 391], [406, 409]]),
  ...run(B, 422, 427, 431, 441, 446, 449, 454, 462),
];

const v2: Clip[] = [
  ...run(B, 240, 243, 246, 250), ...run(B, 267, 271), round(B, 516, 533, { wave: true }), ...run(B, 533, 538, 543),
  ...run(B, 604, 613, 622), ...run(B, 843, 850, 856, 863, 867, 871, 875, 879, 886), round(B, 946, 956, { wave: true }),
  ...singles(B, [[1288, 1294], [1298, 1303], [1353, 1360], [1369, 1374]]),
];

/* camera takes: the picture is on V1 and its sound on A1 */
type Take = { v: string; a: string; clips: Clip[] };
const take = (v: string, a: string, ...clips: Clip[]): Take => ({ v, a, clips });

const takes: Take[] = [
  take(B, G, ...run("", 250, 253, 257, 263, 267), ...run("", 276, 282, 285, 289, 293, 297, 301)),
  take(D, E, ...run("", 301, 306)),
  take(B, E, round("", 315, 336)),
  take(B, G, ...run("", 340, 346)),
  take(D, G, ...run("", 346, 352)),
  take(B, G, ...run("", 356, 361, 366, 370), ...run("", 374, 378, 383, 388)),
  take(B, E, ...run("", 391, 397, 401, 406), ...run("", 409, 414, 419, 422)),
  take(D, G, round("", 463, 473)),
  take(B, G, ...run("", 478, 488, 494, 499), ...run("", 543, 550)),
  take(B, E, ...run("", 593, 604), ...run("", 622, 632, 642)),
  take(D, E, round("", 676, 697)),
  take(
    B, E,
    ...run("", 697, 706, 713, 721), round("", 722, 737), { from: 737, to: 743, color: "", through: true }, round("", 745, 772),
    ...run("", 772, 779), round("", 780, 802), round("", 806, 843, { label: "GH..." }),
    { from: 886, to: 893, color: "", through: true }, ...rounds("", 895, 910, 924, 945), ...run("", 956, 966, 975), round("", 976, 992),
  ),
  take(B, G, ...run("", 992, 999, 1006), round("", 1007, 1028)),
  take(
    B, E,
    ...rounds("", 1029, 1042, 1056, 1066), ...run("", 1066, 1072), ...run("", 1134, 1141, 1148, 1157), round("", 1158, 1185),
    ...run("", 1185, 1193, 1201, 1210, 1220, 1230), ...rounds("", 1231, 1246, 1259),
    ...run("", 1278, 1280, 1285, 1288), ...run("", 1294, 1298), ...run("", 1303, 1308, 1314, 1320, 1327, 1333, 1341, 1348, 1353),
    ...run("", 1360, 1369), ...run("", 1374, 1380, 1389),
  ),
  take(D, E, round("", 1390, 1410)),
];

const v1 = takes.flatMap((t) => t.clips.map((k) => ({ ...k, color: t.v })));
const a1 = takes.flatMap((t) => t.clips.map((k) => ({ ...k, color: t.a })));
const a2 = v2.map((k) => ({ ...k, color: k.from < 300 ? E : G }));
const a3: Clip[] = [round(E, 232, 244), ...v3.map((k) => ({ ...k, color: E })), round(E, 1265, 1404, { label: "Mayor+Major-+320...", curve: true })];
const a4: Clip[] = [...run(G, 234, 237), round(E, 241, 348, { label: "Melody of H...", curve: true }), round(E, 986, 1269, { label: "Legends+-+320bit.mp3", curve: true })];
const a5: Clip[] = [
  round(E, 347, 478, { label: "Melody of Happi...", curve: true }),
  round(E, 499, 806, { label: "Happy Life – FREDJI (No Copyright Music).mp4", curve: true }),
  round(E, 845, 985, { label: "8.+Curiosity+-+320...", curve: true }),
];
const a6: Clip[] = [
  ...run(E, 241, 249), ...run(E, 251, 258), ...run(E, 456, 462), round(E, 463, 473), ...run(E, 481, 488, 497), ...run(E, 501, 507),
  round(E, 554, 567), ...run(E, 567, 575, 580, 587, 591), ...rounds(E, 643, 661, 676), round(E, 724, 737), ...run(E, 737, 745),
  ...run(E, 754, 763), round(E, 781, 797), ...run(E, 797, 802), ...run(E, 808, 818), round(E, 819, 831), ...run(E, 831, 838, 843),
  ...rounds(E, 893, 904, 917), ...run(E, 917, 925), round(E, 926, 943), ...run(E, 964, 970, 976, 986), ...run(E, 1028, 1036, 1039), ...rounds(E, 1040, 1052, 1065),
];

type Track = { id: string; kind: "video" | "audio"; h: number; clips: Clip[]; armed?: boolean; flush?: boolean };

const videoTracks: Track[] = [
  { id: "V6", kind: "video", h: 27, clips: [] },
  { id: "V5", kind: "video", h: 27, clips: v5 },
  { id: "V4", kind: "video", h: 27, clips: v4 },
  { id: "V3", kind: "video", h: 27, clips: v3 },
  { id: "V2", kind: "video", h: 27, clips: v2 },
  { id: "V1", kind: "video", h: 27, clips: v1, armed: true },
];

const audioTracks: Track[] = [
  { id: "A1", kind: "audio", h: 25, clips: a1, armed: true, flush: true },
  { id: "A2", kind: "audio", h: 53, clips: a2 },
  { id: "A3", kind: "audio", h: 27, clips: a3 },
  { id: "A4", kind: "audio", h: 27, clips: a4 },
  { id: "A5", kind: "audio", h: 27, clips: a5 },
  { id: "A6", kind: "audio", h: 27, clips: a6 },
  { id: "A7", kind: "audio", h: 50, clips: [] },
];

const renderMarks = [234, 243, 274, 288, 299, 339, 355, 377, 404, 417, 430, 457, 483, 536, 607, 625, 645, 678, 706, 782, 808, 846, 889, 960, 995, 1031, 1058, 1085, 1144];

const TimelinePanel = styled.section`
  position: relative;
  display: flex;
  flex-direction: column;
  flex: 1;
  min-height: 0;
  overflow: hidden;
  background: ${c.panel};
`;

const RulerRow = styled.div`
  display: flex;
  flex: none;
  height: 46px;
`;

const ClockHead = styled.div`
  display: flex;
  flex-direction: column;
  flex: none;
  width: ${ORIGIN}px;
  border-right: 1px solid ${c.line};
  background: ${c.bar};
`;

const BigClock = styled.output`
  display: flex;
  align-items: center;
  justify-content: center;
  height: 40px;
  padding-top: 2px;
  border-bottom: 1px solid ${c.line};
  font-size: 21px;
  color: #cfcfcf;
`;

const Ruler = styled.div`
  position: relative;
  flex: 1;
  overflow: hidden;
  background-image: repeating-linear-gradient(90deg, #8a8a8c 0 1px, transparent 1px 480px),
    repeating-linear-gradient(90deg, #77777a 0 1px, transparent 1px 240px),
    repeating-linear-gradient(90deg, #55555a 0 1px, transparent 1px 8px),
    repeating-linear-gradient(90deg, #48484d 0 1px, transparent 1px 4px);
  background-size: 100% 22px, 100% 14px, 100% 10px, 100% 5px;
  background-repeat: no-repeat;
`;

const RulerLabel = styled.span<{ $x: number }>`
  position: absolute;
  top: 12px;
  left: ${(p) => p.$x}px;
  font-size: 11px;
  line-height: 14px;
`;

const RenderMark = styled.i.attrs<{ $x: number }>((p) => ({ style: { left: p.$x } }))<{ $x: number }>`
  position: absolute;
  top: 39px;
  width: 5px;
  height: 1px;
  background: #1788de;
`;

const ScrollGutter = styled.div`
  flex: none;
  width: 11px;
  padding-left: 1px;
  background: ${c.gutter};
`;

const TrackArea = styled.div<{ $grow?: boolean }>`
  display: flex;
  flex: ${(p) => (p.$grow ? "1" : "none")};
  min-height: 0;
  overflow: hidden;
`;

const TrackStack = styled.div`
  flex: 1;
  min-width: 0;
`;

const TrackRow = styled.div<{ $h: number }>`
  display: flex;
  height: ${(p) => p.$h}px;
`;

const TrackHead = styled.div<{ $kind: Track["kind"]; $flush?: boolean }>`
  display: grid;
  grid-template-columns: 16px 44px 1fr;
  flex: none;
  width: ${ORIGIN}px;
  border-top: ${(p) => (p.$flush ? 0 : 1)}px solid ${c.line};
  border-right: 1px solid ${c.line};
  border-left: 3px solid ${(p) => (p.$kind === "video" ? c.blue : c.green)};
  background: ${c.bar};
  > * { border-left: 1px solid ${c.line}; }
`;

const TrackName = styled.div<{ $armed?: boolean }>`
  display: flex;
  align-items: center;
  justify-content: center;
  padding: 2px 0 0 3px;
  font-weight: 600;
  color: ${c.bright};
  ${(p) =>
    p.$armed &&
    css`
      padding-top: 0;
      font-weight: 400;
      color: #77787a;
      span {
        width: 32px;
        height: 20px;
        border: 1px solid ${c.red};
        border-radius: 1px;
        line-height: 19px;
        text-align: center;
      }
    `}
`;

const TrackControls = styled.div<{ $kind: Track["kind"] }>`
  display: flex;
  align-items: center;
  padding: 0 0 ${(p) => (p.$kind === "video" ? 3 : 0)}px 15px;
  button { height: 20px; }
  > button:nth-child(2) { margin: 0 10px 0 12px; color: #fff; }
`;

const SoloMute = styled.button`
  width: 20px;
  margin-right: 8px;
  border: 1px solid #68686b;
  border-radius: 2px;
  line-height: 18px;
`;

const ChannelCount = styled.span`
  margin-left: auto;
  padding: 3px 8px 0 0;
  font-size: 11px;
  color: #5b5b5e;
`;

const Lane = styled.div<{ $flush?: boolean }>`
  position: relative;
  flex: 1;
  min-width: 0;
  overflow: hidden;
  border-top: ${(p) => (p.$flush ? 0 : 1)}px solid #333237;
  background: linear-gradient(270deg, rgba(0, 0, 0, 0.3), transparent 10px),
    repeating-linear-gradient(90deg, #3b3a40 0 1px, transparent 1px 480px) ${c.panel};
`;

type ClipBoxProps = { $from: number; $to: number; $color: string; $round?: boolean; $through?: boolean };

const ClipBox = styled.div.attrs<ClipBoxProps>((p) => ({
  style: { left: p.$from - ORIGIN - (p.$round ? 1 : 0), width: p.$to - p.$from + 1 },
}))<ClipBoxProps>`
  position: absolute;
  top: 0;
  bottom: 0;
  display: flex;
  align-items: center;
  justify-content: space-between;
  overflow: hidden;
  border: 1px solid #050507;
  background: ${(p) => p.$color};
  font-size: 11px;
  white-space: nowrap;
  color: #e9efeb;
  ${(p) =>
    p.$round &&
    css`
      border-color: #1c2524;
      border-radius: 4px;
    `}
  ${(p) =>
    p.$through &&
    css`
      border-right: 1px dashed #a9b4b4;
    `}
`;

const ClipLabel = styled.span`
  padding: 0 3px;
`;

const CurveSlot = styled.span`
  padding: 0 4px 4px 0;
`;

const ClipWave = styled.i`
  position: absolute;
  top: 11px;
  left: 0;
  width: 100%;
  height: 15px;
  border-bottom: 1px solid rgba(0, 0, 0, 0.35);
  svg { margin-top: -4px; }
`;

const FadeClip = styled.div`
  position: absolute;
  top: 0;
  left: ${312 - ORIGIN}px;
  width: 25px;
  height: 50px;
  border: 1px solid #1c2524;
  border-radius: 4px;
  background: ${c.greenDark};
`;

const Splitter = styled.div`
  flex: none;
  height: 4px;
  border: solid ${c.line};
  border-width: 1px 0;
  background: #414141;
`;

const ScrollRow = styled.div`
  display: flex;
  flex: none;
  height: 11px;
  background: ${c.gutter};
  &::before {
    content: "";
    width: ${ORIGIN}px;
    border-right: 1px solid ${c.line};
  }
`;

const Playhead = styled.div`
  position: absolute;
  top: 0;
  bottom: 11px;
  left: 233px;
  display: flex;
  flex-direction: column;
  align-items: center;
  width: 15px;
  color: ${c.red};
  &::after {
    content: "";
    flex: 1;
    width: 1px;
    background: ${c.red};
  }
`;

const TrackLine = ({ t }: { t: Track }) => (
  <TrackRow $h={t.h}>
    <TrackHead $kind={t.kind} $flush={t.flush}>
      <div />
      <TrackName $armed={t.armed}><span>{t.id}</span></TrackName>
      <TrackControls $kind={t.kind}>
        <IconButton $color="#77777a" aria-label={`Lock ${t.id}`}><LockIcon /></IconButton>
        <IconButton aria-label={`Auto select ${t.id}`}><AutoSelectIcon /></IconButton>
        {t.kind === "video" ? (
          <IconButton $color="#fff" aria-label={`Enable ${t.id}`}><TrackFilmIcon /></IconButton>
        ) : (
          <>
            <SoloMute aria-label={`Solo ${t.id}`}>S</SoloMute>
            <SoloMute aria-label={`Mute ${t.id}`}>M</SoloMute>
            <ChannelCount>2.0</ChannelCount>
          </>
        )}
      </TrackControls>
    </TrackHead>
    <Lane $flush={t.flush}>
      {t.clips.map((k, i) => (
        <ClipBox key={i} $from={k.from} $to={k.to} $color={k.color} $round={k.round} $through={k.through}>
          {k.label && <ClipLabel>{k.label}</ClipLabel>}
          {k.curve && <CurveSlot><CurveIcon /></CurveSlot>}
          {k.wave && t.kind === "audio" && (
            <ClipWave>
              <Icon w={17} h={9}><path d="M0 4.500h17M2.500 2.500v4M4.500 1v7" strokeWidth={1.6} /><path d="M6 4.500h1M10 4.500h6" strokeWidth={3} /></Icon>
            </ClipWave>
          )}
        </ClipBox>
      ))}
      {t.id === "A7" && (
        <FadeClip>
          <svg width="25" height="30" viewBox="0 0 25 30" overflow="visible" fill="#fff" aria-hidden="true">
            <path d="M3 9h20M7 6v5M10 7v4M12 5v7M14 7v4M17 7v5" stroke="#d8ebe0" strokeWidth="1.8" />
            <path d="M2 19.500h21" stroke="#254a34" />
            <circle cx="4" cy="8.5" r="3.6" />
            <circle cx="22" cy="8.5" r="3.6" />
            <circle cx="3" cy="16.5" r="3.6" />
            <circle cx="24" cy="18.5" r="3.6" />
          </svg>
        </FadeClip>
      )}
    </Lane>
  </TrackRow>
);

const Timeline = () => (
  <TimelinePanel>
    <RulerRow>
      <ClockHead><BigClock>01:00:05:30</BigClock></ClockHead>
      <Ruler>
        <RulerLabel $x={7}>01:00:00:00</RulerLabel>
        <RulerLabel $x={486}>01:04:54:00</RulerLabel>
        <RulerLabel $x={966}>01:09:48:00</RulerLabel>
        {renderMarks.map((x) => <RenderMark key={x} $x={x - ORIGIN - 2} />)}
      </Ruler>
      <ScrollGutter />
    </RulerRow>
    <TrackArea>
      <TrackStack>{videoTracks.map((t) => <TrackLine key={t.id} t={t} />)}</TrackStack>
      <ScrollGutter />
    </TrackArea>
    <Splitter />
    <TrackArea $grow>
      <TrackStack>{audioTracks.map((t) => <TrackLine key={t.id} t={t} />)}</TrackStack>
      <ScrollGutter><ScrollThumb $w="9px" $h="212px" /></ScrollGutter>
    </TrackArea>
    <ScrollRow><ScrollThumb $w="628px" $h="9px" /></ScrollRow>
    <Playhead>
      <Icon w={15} h={14} fill><path d="M0 0h15v7.500L8.500 14h-2L0 7.500z" /></Icon>
    </Playhead>
  </TimelinePanel>
);

/* ----------------------------------------------------------------- inspector */

const InspectorPanel = styled.aside`
  position: relative;
  display: flex;
  flex-direction: column;
  min-height: 0;
  overflow: hidden;
  border-left: 1px solid ${c.line};
  background: ${c.panel};
  &::after {
    content: "";
    position: absolute;
    inset: auto 8px 0 0;
    height: 14px;
    pointer-events: none;
    background: linear-gradient(transparent, rgba(16, 16, 18, 0.8));
  }
`;

const InspectorTitle = styled.h2`
  flex: 1;
  margin: 0;
  padding: 1px 0 0 8px;
  font-size: 12px;
  font-weight: 600;
  color: ${c.bright};
`;

const InspectorTabs = styled.div`
  display: flex;
  flex: none;
  height: 53px;
  padding: 0 10px 0 14px;
  border-bottom: 1px solid ${c.line};
  background: ${c.bar};
`;

const InspectorTab = styled.button<{ $state: "on" | "off" | "idle"; $wide?: boolean }>`
  display: flex;
  flex-direction: column;
  align-items: center;
  justify-content: space-between;
  flex: ${(p) => (p.$wide ? 72 : 64)} 0 0;
  padding: 10px 0 0;
  border-bottom: 2px solid ${(p) => (p.$state === "on" ? c.red : "transparent")};
  font-size: 11px;
  line-height: 20px;
  color: ${(p) => ({ on: "#fff", off: c.dim, idle: c.text })[p.$state]};
`;

const Segmented = styled.div`
  display: grid;
  grid-template-columns: 1fr 1fr;
  flex: none;
  height: 24px;
  margin: 9px 6px 10px 9px;
  border: 1px solid ${c.line};
  border-radius: 3px;
  overflow: hidden;
`;

const Segment = styled.button<{ $on?: boolean }>`
  padding-top: 1px;
  font-size: 12px;
  line-height: 21px;
  color: ${(p) => (p.$on ? c.bright : c.text)};
  background: ${(p) => (p.$on ? c.top : c.bar)};
  & + & { border-left: 1px solid ${c.line}; }
`;

const InspectorBody = styled.div`
  display: grid;
  grid-template-columns: 1fr 6px;
  flex: 1;
  min-height: 0;
  border-top: 1px solid ${c.line};
`;

const Properties = styled.form`
  min-height: 0;
  overflow: hidden;
`;

const SectionHead = styled.div`
  display: flex;
  align-items: center;
  height: 30px;
  margin-bottom: 2px;
  padding: 0 10px 1px 15px;
  color: ${c.bright};
`;

const SectionLabel = styled.label`
  display: flex;
  align-items: center;
  gap: 10px;
  font-size: 13px;
`;

const ToggleBox = styled.input.attrs({ type: "checkbox" })`
  appearance: none;
  width: 24px;
  height: 14px;
  margin: 0;
  border-radius: 7px;
  background: radial-gradient(circle at 17px 7px, ${c.red} 4px, transparent 5px) #171717;
`;

const RowActions = styled.div`
  display: flex;
  align-items: center;
  gap: 19px;
  margin-left: auto;
  padding-bottom: 1px;
  button { height: 14px; }
`;

const TextContent = styled.textarea`
  display: block;
  width: calc(100% - 30px);
  height: 96px;
  margin: 6px 0 3px 12px;
  padding: 4px;
  border: 1px solid ${c.line};
  border-radius: 3px;
  outline: 0;
  resize: none;
  overflow: hidden;
  background: ${c.well};
  font-size: 19px;
  line-height: 26px;
  color: ${c.bright};
`;

const Row = styled.div<{ $shift?: boolean }>`
  display: flex;
  align-items: center;
  height: 25px;
  padding: 0 ${(p) => (p.$shift ? 9 : 10)}px 0 ${(p) => (p.$shift ? 4 : 0)}px;
`;

const RowLabel = styled.label`
  flex: none;
  width: 130px;
  margin-right: 10px;
  padding-top: 1px;
  text-align: right;
  font-size: 11px;
  line-height: 18px;
  color: ${c.soft};
`;

const Field = styled.input`
  flex: none;
  width: 54px;
  height: 20px;
  padding: 0;
  border: 1px solid ${c.line};
  border-radius: 2px;
  outline: 0;
  background: ${c.well};
  font-size: 12px;
  text-align: center;
  color: ${c.bright};
`;

const SliderSlot = styled.div<{ $wide?: boolean; $shift?: boolean }>`
  display: flex;
  align-items: center;
  flex: none;
  width: ${(p) => (p.$wide ? 140 : 138)}px;
  margin-left: ${(p) => (p.$shift ? -3 : 0)}px;
  padding-left: ${(p) => (p.$wide ? 0 : 4)}px;
`;

const SelectWrap = styled.div`
  position: relative;
  width: 192px;
  svg {
    position: absolute;
    top: 5px;
    right: 10px;
    pointer-events: none;
  }
`;

const Select = styled.select`
  appearance: none;
  display: block;
  width: 100%;
  height: 20px;
  padding: 0 10px;
  border: 1px solid ${c.line};
  border-radius: 2px;
  background: ${c.well};
  font-size: 11px;
  color: ${c.soft};
`;

const Swatch = styled.button<{ $color: string }>`
  width: 39px;
  height: 20px;
  border: 1px solid #000;
  border-radius: 2px;
  background: ${(p) => p.$color};
`;

const IconStrip = styled.div`
  display: flex;
  width: 220px;
  margin-left: -9px;
  button { width: 36px; height: 20px; padding-bottom: 4px; }
`;

const Axis = styled.label`
  display: flex;
  align-items: center;
  font-size: 11px;
  color: #a2a2a4;
  span { width: 16px; padding: 3px 0 0 3px; }
`;

const AxisGap = styled.div`
  display: flex;
  justify-content: center;
  width: 54px;
  padding-left: 12px;
  color: ${c.bright};
`;

const Section = styled.section<{ $inset?: boolean; $h: number }>`
  min-height: ${(p) => p.$h}px;
  margin-left: ${(p) => (p.$inset ? 2 : 0)}px;
  margin-right: ${(p) => (p.$inset ? 7 : 1)}px;
  border-top: 1px solid ${c.line};
  ${SectionHead}, ${Row} {
    margin-left: ${(p) => (p.$inset ? -2 : 0)}px;
    margin-right: ${(p) => (p.$inset ? -7 : -1)}px;
  }
`;

const StrokeTitle = styled.h3`
  display: flex;
  align-items: center;
  gap: 9px;
  margin: 0 0 4px;
  padding: 0 0 0 4px;
  font-size: 13px;
  line-height: 27px;
  font-weight: 400;
  color: ${c.soft};
  svg { color: ${c.text}; }
`;

const Spacer = styled.div<{ $h: number }>`
  height: ${(p) => p.$h}px;
`;

const Actions = ({ name, keyed, plus }: { name: string; keyed?: boolean; plus?: boolean }) => (
  <RowActions>
    {keyed && <IconButton type="button" $color="#a0a0a4" aria-label={`Keyframe ${name}`}><DiamondIcon /></IconButton>}
    <IconButton type="button" $color="#858587" aria-label={`Reset ${name}`}><ResetIcon plus={plus} /></IconButton>
  </RowActions>
);

const slug = (s: string) => s.toLowerCase().replace(/[^a-z0-9]+/g, "-");

const SelectRow = ({ name, value }: { name: string; value: string }) => (
  <Row>
    <RowLabel htmlFor={slug(name)}>{name}</RowLabel>
    <SelectWrap>
      <Select id={slug(name)} defaultValue={value}><option>{value}</option></Select>
      <Chevron />
    </SelectWrap>
    <Actions name={name} />
  </Row>
);

type SliderRowProps = { name: string; group?: string; value: string; at: number; wide?: boolean; keyed?: boolean; shift?: boolean };

const SliderRow = ({ name, group = "text", value, at, wide, keyed, shift }: SliderRowProps) => {
  const id = slug(`${group} ${name}`);
  return (
    <Row $shift={shift}>
      <RowLabel htmlFor={id}>{name}</RowLabel>
      <SliderSlot $wide={wide} $shift={shift}>
        <Range $w={wide ? 134 : 126} aria-label={`${name} slider`} defaultValue={at} />
      </SliderSlot>
      <Field id={id} defaultValue={value} />
      <Actions name={name} keyed={keyed} />
    </Row>
  );
};

const ColorRow = ({ name, group, color, shift }: { name: string; group: string; color: string; shift?: boolean }) => (
  <Row $shift={shift}>
    <RowLabel htmlFor={slug(`${group} ${name}`)}>{name}</RowLabel>
    <Swatch type="button" id={slug(`${group} ${name}`)} $color={color} />
  </Row>
);

const PairRow = ({ name, x, y, link }: { name: string; x: string; y: string; link?: boolean }) => (
  <Row>
    <RowLabel as="span">{name}</RowLabel>
    <Axis><span>X</span><Field defaultValue={x} /></Axis>
    <AxisGap>{link && <LinkIcon size={13} />}</AxisGap>
    <Axis><span>Y</span><Field defaultValue={y} /></Axis>
    <Actions name={name} keyed />
  </Row>
);

const Serif = styled.span<{ $line?: "under" | "over" | "strike" }>`
  position: relative;
  font: 700 13px/14px "Liberation Serif", serif;
  sup, sub { font: 700 9px/8px "Open Sans", sans-serif; opacity: 0.6; }
  ${(p) =>
    p.$line &&
    css`
      &::after {
        content: "";
        position: absolute;
        left: -2px;
        right: -2px;
        ${{ under: "bottom: -2px", over: "top: -1px", strike: "top: 7px" }[p.$line]};
        height: 1px;
        background: currentColor;
      }
    `}
`;

const alignLines = [
  [[0, 14], [0, 8], [0, 12], [0, 12]],
  [[0, 14], [3, 11], [1, 13], [2, 12]],
  [[0, 14], [6, 14], [2, 14], [2, 14]],
  [[0, 14], [0, 14], [0, 14], [0, 11]],
];

const anchors = [
  { d: "M3.500 1.500h10v6h-10z", dots: "M0 10.500h17", name: "bottom" },
  { d: "M3.500 4V2.500h10V4M3.500 7v1.500h10V7", dots: "M0 5.500h17", name: "middle", on: true },
  { d: "M3.500 4.500h10v6h-10z", dots: "M0 1.500h17", name: "top" },
  { d: "M4.500 2.500h10v7h-10z", dots: "M1.500-1v15", name: "left" },
  { d: "M7 2.500H3.500v7H7M10 2.500h3.500v7H10", dots: "M8.500-1v15", name: "center", on: true },
  { d: "M2.500 2.500h10v7h-10z", dots: "M15.500-1v15", name: "right" },
];

const Inspector = () => (
  <InspectorPanel>
    <PanelHeader>
      <InspectorTitle>Timeline - Title - Text</InspectorTitle>
      <HeaderCell $w={33} $side="left">
        <IconButton $color="#58585b" aria-label="Inspector options"><Dots /></IconButton>
      </HeaderCell>
    </PanelHeader>
    <InspectorTabs>
      <InspectorTab $state="on"><FilmIcon />Video</InspectorTab>
      <InspectorTab $state="off"><NoteIcon />Audio</InspectorTab>
      <InspectorTab $state="off"><WandIcon size={18} />Effects</InspectorTab>
      <InspectorTab $state="off" $wide>
        <Icon w={21} h={17}><rect x="0.6" y="0.6" width="19.8" height="15.8" /><path d="M3 2h15l-7.500 6.500zM3 15h15l-7.500-6.500z" fill="currentColor" stroke="none" /></Icon>
        Transition
      </InspectorTab>
      <InspectorTab $state="off">
        <Icon w={21} h={17}><rect x="0.6" y="0.6" width="19.8" height="15.8" /><path d="M3 12l4-3 3 2 5-4 4 3" /><circle cx="6" cy="5.5" r="1" /></Icon>
        Image
      </InspectorTab>
      <InspectorTab $state="idle"><FileIcon />File</InspectorTab>
    </InspectorTabs>
    <Segmented>
      <Segment $on>Title</Segment>
      <Segment>Settings</Segment>
    </Segmented>
    <InspectorBody>
      <Properties>
        <SectionHead>
          <SectionLabel htmlFor="rich-text">Rich Text</SectionLabel>
          <Actions name="rich text" keyed plus />
        </SectionHead>
        <TextContent id="rich-text" spellCheck={false} defaultValue={"Berget 18 - Part 01\nRoadtrip & Pre game"} />
        <SelectRow name="Font Family" value="Montserrat" />
        <SelectRow name="Font Face" value="Bold" />
        <ColorRow name="Color" group="text" color="#fff" />
        <SliderRow name="Size" value="96" at={0} />
        <SliderRow name="Tracking" value="0" at={50} />
        <SliderRow name="Line Spacing" value="0" at={32} />
        <Row>
          <RowLabel as="span">Font Style</RowLabel>
          <IconStrip>
            <IconButton type="button" aria-label="Underline"><Serif $line="under">T</Serif></IconButton>
            <IconButton type="button" aria-label="Overline"><Serif $line="over">T</Serif></IconButton>
            <IconButton type="button" aria-label="Strikethrough"><Serif $line="strike">T</Serif></IconButton>
            <IconButton type="button" aria-label="Superscript"><Serif>T<sup>2</sup></Serif></IconButton>
            <IconButton type="button" aria-label="Subscript"><Serif>T<sub>2</sub></Serif></IconButton>
          </IconStrip>
          <Actions name="font style" />
        </Row>
        <SelectRow name="Font Case" value="Mixed" />
        <Row>
          <RowLabel as="span">Alignment</RowLabel>
          <IconStrip>
            {alignLines.map((lines, i) => (
              <IconButton type="button" key={i} $color={i ? c.text : "#fff"} aria-label={["Align left", "Align center", "Align right", "Justify"][i]}>
                <Icon w={14} h={11} sw={2}>{lines.map(([a, b], j) => <path key={j} d={`M${a} ${1 + j * 3}H${b}`} />)}</Icon>
              </IconButton>
            ))}
          </IconStrip>
          <Actions name="alignment" />
        </Row>
        <Row>
          <RowLabel as="span">Anchor</RowLabel>
          <IconStrip>
            {anchors.map((a) => (
              <IconButton type="button" key={a.name} $color={a.on ? "#fff" : "#7c7c7e"} aria-label={`Anchor ${a.name}`}>
                <svg width="17" height="12" viewBox="0 0 17 12" overflow="visible" fill="none" stroke="currentColor" aria-hidden="true">
                  <path d={a.d} />
                  <path d={a.dots} strokeDasharray="1 1" />
                </svg>
              </IconButton>
            ))}
          </IconStrip>
          <Actions name="anchor" />
        </Row>
        <PairRow name="Position" x="598.000" y="241.000" />
        <PairRow name="Zoom" x="1.000" y="1.000" link />
        <SliderRow name="Rotation Angle" value="0.000" at={50} wide keyed />
        <Spacer $h={8} />
        <Section $inset $h={92}>
          <StrokeTitle><Chevron />Stroke</StrokeTitle>
          <ColorRow name="Color" group="stroke" color="#000" shift />
          <SliderRow name="Size" group="stroke" value="0" at={0} wide shift />
        </Section>
        <Section $h={140}>
          <SectionHead>
            <SectionLabel><ToggleBox defaultChecked />Drop Shadow</SectionLabel>
            <Actions name="drop shadow" keyed plus />
          </SectionHead>
          <ColorRow name="Color" group="shadow" color="#000" />
          <PairRow name="Offset" x="0.000" y="0.000" />
          <SliderRow name="Blur" group="shadow" value="20" at={17} wide keyed />
          <SliderRow name="Opacity" group="shadow" value="75" at={76} wide keyed />
        </Section>
        <Section $h={110}>
          <SectionHead>
            <SectionLabel><ToggleBox defaultChecked />Background</SectionLabel>
            <Actions name="background" keyed plus />
          </SectionHead>
          <ColorRow name="Color" group="background" color="#000" />
          <ColorRow name="Outline Color" group="background" color="#000" />
          <SliderRow name="Outline Width" group="background" value="0" at={0} wide keyed />
        </Section>
      </Properties>
      <ScrollThumb $w="8px" $h="694px" />
    </InspectorBody>
  </InspectorPanel>
);

/* ---------------------------------------------------------------- page footer */

const Footer = styled.footer`
  display: grid;
  grid-template-columns: 1fr auto 1fr;
  flex: none;
  height: 33px;
  border-top: 1px solid ${c.line};
  background: ${c.top};
`;

const Brand = styled.div`
  display: flex;
  align-items: center;
  gap: 9px;
  padding: 0 0 2px 26px;
  font-size: 13px;
  color: #d0d0d0;
`;

const PageTabs = styled.nav`
  display: flex;
  padding-left: 3px;
`;

const PageTab = styled.button<{ $on?: boolean }>`
  display: flex;
  align-items: center;
  justify-content: center;
  width: 120px;
  padding-bottom: ${(p) => (p.$on ? 0 : 2)}px;
  border-bottom: ${(p) => (p.$on ? `2px solid ${c.red}` : "0")};
  background: ${(p) => (p.$on ? "#000" : "none")};
  color: #77787a;
`;

const FooterEnd = styled.div`
  display: flex;
  align-items: center;
  justify-content: flex-end;
  gap: 33px;
  padding: 0 23px 2px 0;
`;

/* ----------------------------------------------------------------------- app */

const menus = ["DaVinci Resolve", "File", "Edit", "Trim", "Timeline", "Clip", "Mark", "View", "Playback", "Fusion", "Color", "Fairlight", "Workspace", "Help"];

export default function App() {
  return (
    <Page>
      <GlobalStyle />
      <TitleBar>
        <TaskProgress />
        <AppBadge>
          <svg width="12" height="12" viewBox="0 0 12 12" aria-hidden="true">
            <rect width="12" height="12" rx="2" fill="#1d2f3f" />
            <circle cx="6" cy="3.8" r="1.8" fill="#3cb4e6" />
            <circle cx="4" cy="7.8" r="1.8" fill="#cfe05a" />
            <circle cx="8" cy="7.8" r="1.8" fill="#e6553c" />
          </svg>
        </AppBadge>
        DaVinci Resolve - 20220629 Berget 18 - Part 01
        <WindowButtons>
          <IconButton aria-label="Minimize"><Icon w={11} h={11} sw={1}><path d="M0 5.500h11" /></Icon></IconButton>
          <IconButton aria-label="Restore"><Icon w={11} h={11} sw={1}><path d="M.5 2.500h8v8h-8zM2.500 2.500v-2h8v8h-2" /></Icon></IconButton>
          <IconButton aria-label="Close"><Icon w={11} h={11} sw={1.1}><path d="M.5.5l10 10M10.500.5l-10 10" /></Icon></IconButton>
        </WindowButtons>
      </TitleBar>
      <MenuBar>{menus.map((m) => <button key={m}>{m}</button>)}</MenuBar>
      <AppToolbar>
        <ToolbarSide>
          <IconButton $w={57} aria-label="Layout presets">
            <Icon w={17} h={16}><rect x="0.6" y="0.6" width="15.8" height="14.8" /><path d="M5 5.500l3.500 4.500L12 5.500" /></Icon>
          </IconButton>
          <VRule />
          <PanelToggle><MediaPoolIcon />Media Pool</PanelToggle>
          <VRule />
          <PanelToggle $on><WandIcon />Effects</PanelToggle>
          <VRule />
          <PanelToggle><EditIndexIcon />Edit Index</PanelToggle>
          <VRule />
          <PanelToggle><SoundLibraryIcon />Sound Library</PanelToggle>
        </ToolbarSide>
        <ProjectTitle>20220629 Berget 18 - Part 01</ProjectTitle>
        <ToolbarSide>
          <VRule $h={14} $m={11} />
          <ProjectState>Edited</ProjectState>
          <ToolbarSide $end>
            <ViewToggle><MixerIcon />Mixer</ViewToggle>
            <VRule />
            <ViewToggle><MetadataIcon />Metadata</ViewToggle>
            <VRule />
            <PanelToggle $on><InspectorIcon />Inspector</PanelToggle>
            <VRule />
            <FullScreenButton $w={48} aria-label="Full screen viewer">
              <Icon w={17} h={16}><rect x="0.6" y="0.6" width="15.8" height="9.5" /><path d="M4.500 15.500l4-4.500 4 4.500" /></Icon>
            </FullScreenButton>
          </ToolbarSide>
        </ToolbarSide>
      </AppToolbar>
      <Workspace>
        <LeftColumn>
          <UpperRow>
            <Effects />
            <Viewer />
          </UpperRow>
          <TimelineToolbar />
          <Timeline />
        </LeftColumn>
        <Inspector />
      </Workspace>
      <Footer>
        <Brand>
          <Icon w={18} h={17} fill>
            <path d="M9 0c3 0 4 2.500 3.500 4.500C12 6.500 10 9 9 9S6 6.500 5.500 4.500C5 2.500 6 0 9 0zM8.500 9.800c.5 1-1 4.200-2.500 5.700-1.500 1.400-4 1.500-5.300-.5C-.6 12.700.8 10.700 2.700 10c2-.7 5.300-1 5.800-.2zM9.500 9.800c-.5 1 1 4.200 2.500 5.700 1.500 1.400 4 1.500 5.300-.5 1.300-2.300-.1-4.300-2-5-2-.7-5.300-1-5.800-.2z" />
          </Icon>
          DaVinci Resolve 18
        </Brand>
        <PageTabs>
          <PageTab aria-label="Media">
            <Icon w={17} h={17}><path d="M2 .6h13M1 3h15" /><rect x="0.6" y="5.6" width="15.8" height="10.8" /><path d="M3 14l3.500-4 2.500 2.500 2-2L14 14" /></Icon>
          </PageTab>
          <PageTab aria-label="Cut">
            <Icon w={25} h={16}><path d="M9 2L7 13.500h6.500L15.500 2zM17 2h7l-2 11.500h-6.500M16.500 0L14 16M4 3.500h4M1 6.500h6.500M3 9.500h4M0 12.500h6" /></Icon>
          </PageTab>
          <PageTab $on aria-label="Edit">
            <svg width="24" height="17" viewBox="0 0 24 17" aria-hidden="true">
              <path d="M1 3h9v3H1zM15 3h7v3h-7zM5 7.500h6v3H5zM14 7.500h7v3h-7z" fill="#4d93d6" />
              <path d="M0 12.500h10v3H0zM14 12.500h10v3H14z" fill="#4f9d4e" />
              <path d="M11 0h3v3l-1 1v13h-1V4l-1-1z" fill={c.red} />
            </svg>
          </PageTab>
          <PageTab aria-label="Fusion">
            <Icon w={18} h={18} sw={1.3}><path d="M16.500 5L10 15.500c-.8 1.200-3 0-2.300-1.500L14 3.500c.8-1.200 3.200.2 2.500 1.500z" fill="currentColor" fillOpacity={0.5} /><path d="M6 1v5M3.500 3.500h5M2 8v4M0 10h4M10.500 0v3M9 1.500h3" /></Icon>
          </PageTab>
          <PageTab aria-label="Color">
            <Icon w={17} h={17} fill>
              {[0, 1, 2, 3, 4, 5, 6, 7].map((i) => (
                <circle key={i} cx={8.5 + 6.5 * Math.cos((i * Math.PI) / 4)} cy={8.5 + 6.5 * Math.sin((i * Math.PI) / 4)} r={i === 7 ? 1.2 : 1.7} />
              ))}
              <circle cx="8.5" cy="8.5" r="1.8" />
            </Icon>
          </PageTab>
          <PageTab aria-label="Fairlight"><NoteIcon w={14} h={15} /></PageTab>
          <PageTab aria-label="Deliver">
            <Icon w={17} h={17}><path d="M5 10C6 5 10 1 16 1c0 6-4 10-9 11zM5.500 7H2.500L.8 10.500 4.500 10M10 11.500v3L6.500 16.200 7 12.500M4 12l-3 4.200L5 13" /><circle cx="11" cy="6" r="1.6" /></Icon>
          </PageTab>
        </PageTabs>
        <FooterEnd>
          <IconButton aria-label="Home"><Icon w={15} h={14} fill><path d="M7.500 0L15 7h-2v7H9.500V9h-4v5H2V7H0z" /></Icon></IconButton>
          <IconButton aria-label="Settings">
            <Icon w={16} h={16} sw={1.8}>
              <circle cx="8" cy="8" r="4.7" />
              <path d="M8 0v3M8 13v3M0 8h3M13 8h3M2.300 2.300l2.200 2.200M11.500 11.500l2.200 2.200M13.700 2.300l-2.200 2.200M4.500 11.500l-2.200 2.200" />
            </Icon>
          </IconButton>
        </FooterEnd>
      </Footer>
    </Page>
  );
}
